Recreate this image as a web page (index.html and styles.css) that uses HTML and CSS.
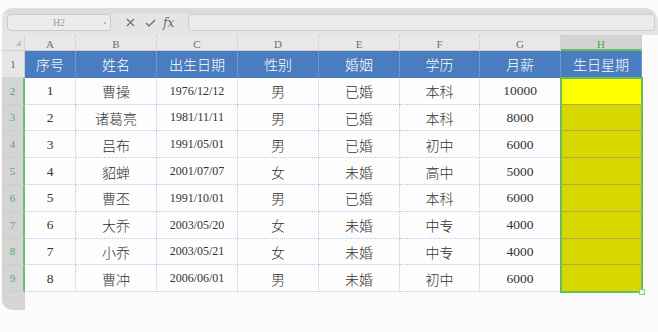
FILE: index.html
```html
<!DOCTYPE html>
<html lang="zh">
<head>
<meta charset="utf-8">
<link rel="stylesheet" href="styles.css">
</head>
<body>
<div class="app">
  <div class="toolbar">
    <div class="namebox"><span class="nb-text">H2</span><i class="caret"></i></div>
    <div class="tools">
      <svg class="ico-x" width="9" height="9" viewBox="0 0 9 9"><path d="M1 1L8 8M8 1L1 8" stroke="#707070" stroke-width="1.2" fill="none"/></svg>
      <svg class="ico-ok" width="11" height="8" viewBox="0 0 11 8"><path d="M1 4L4 7L10 1" stroke="#707070" stroke-width="1.3" fill="none"/></svg>
      <span class="fx">fx</span>
    </div>
    <div class="formula"></div>
  </div>
  <div class="sheet">
    <div class="corner"><i class="tri"></i></div>
    <div class="ch">A</div><div class="ch">B</div><div class="ch">C</div><div class="ch">D</div>
    <div class="ch">E</div><div class="ch">F</div><div class="ch">G</div><div class="ch sel">H</div>

    <div class="rh">1</div>
    <div class="c hd">序号</div><div class="c hd">姓名</div><div class="c hd">出生日期</div><div class="c hd">性别</div>
    <div class="c hd">婚姻</div><div class="c hd">学历</div><div class="c hd">月薪</div><div class="c hd">生日星期</div>

    <div class="rh sel">2</div>
    <div class="c num">1</div><div class="c">曹操</div><div class="c date">1976/12/12</div><div class="c">男</div>
    <div class="c">已婚</div><div class="c">本科</div><div class="c num">10000</div><div class="c yel active first"></div>

    <div class="rh sel">3</div>
    <div class="c num">2</div><div class="c">诸葛亮</div><div class="c date">1981/11/11</div><div class="c">男</div>
    <div class="c">已婚</div><div class="c">本科</div><div class="c num">8000</div><div class="c yel"></div>

    <div class="rh sel">4</div>
    <div class="c num">3</div><div class="c">吕布</div><div class="c date">1991/05/01</div><div class="c">男</div>
    <div class="c">已婚</div><div class="c">初中</div><div class="c num">6000</div><div class="c yel"></div>

    <div class="rh sel">5</div>
    <div class="c num">4</div><div class="c">貂蝉</div><div class="c date">2001/07/07</div><div class="c">女</div>
    <div class="c">未婚</div><div class="c">高中</div><div class="c num">5000</div><div class="c yel"></div>

    <div class="rh sel">6</div>
    <div class="c num">5</div><div class="c">曹丕</div><div class="c date">1991/10/01</div><div class="c">男</div>
    <div class="c">已婚</div><div class="c">本科</div><div class="c num">6000</div><div class="c yel"></div>

    <div class="rh sel">7</div>
    <div class="c num">6</div><div class="c">大乔</div><div class="c date">2003/05/20</div><div class="c">女</div>
    <div class="c">未婚</div><div class="c">中专</div><div class="c num">4000</div><div class="c yel"></div>

    <div class="rh sel">8</div>
    <div class="c num">7</div><div class="c">小乔</div><div class="c date">2003/05/21</div><div class="c">女</div>
    <div class="c">未婚</div><div class="c">中专</div><div class="c num">4000</div><div class="c yel"></div>

    <div class="rh sel">9</div>
    <div class="c num">8</div><div class="c">曹冲</div><div class="c date">2006/06/01</div><div class="c">男</div>
    <div class="c">未婚</div><div class="c">初中</div><div class="c num">6000</div><div class="c yel last"><i class="handle"></i></div>

    <div class="tail"></div>
  </div>
</div>
</body>
</html>
```

FILE: styles.css
```css
html, body {
  margin: 0;
  padding: 0;
}
body {
  background: #fbfbfc;
  width: 658px;
  height: 332px;
  overflow: hidden;
  font-family: "Liberation Serif", "Noto Sans CJK SC", serif;
}
.app {
  margin: 8px 0 0 2px;
  width: 656px;
}
.toolbar {
  height: 27px;
  box-sizing: border-box;
  padding: 6px 3px 4px 5px;
  display: flex;
  align-items: center;
  background: linear-gradient(#dcdcdc 0, #dcdcdc 6px, #e5e5e5 6px);
  border-radius: 10px 14px 0 0;
}
.namebox {
  width: 104px;
  height: 17px;
  box-sizing: border-box;
  border: 1px solid #c9c9c9;
  border-radius: 4px;
  background: #ececec;
  display: flex;
  align-items: center;
}
.nb-text {
  flex: 1;
  text-align: center;
  font-size: 10px;
  color: #9c9c9c;
  padding-left: 6px;
}
.caret {
  width: 2px;
  height: 2px;
  background: #b5b5b5;
  margin-right: 4px;
}
.tools {
  display: flex;
  align-items: center;
  margin-left: 15px;
  width: 62px;
}
.ico-x { margin-right: 10px; }
.ico-ok { margin-right: 7px; }
.fx {
  font-family: "DejaVu Serif", serif;
  font-style: italic;
  font-size: 12px;
  color: #6b6b6b;
  line-height: 1;
}
.formula {
  flex: 1;
  height: 17px;
  box-sizing: border-box;
  border: 1px solid #cdcdcd;
  border-radius: 4px;
  background: #ececec;
}
.sheet {
  display: grid;
  grid-template-columns: 23px 51px repeat(4, 81px) 80px 81px 81px;
  grid-template-rows: 16px repeat(9, 26.8px) 18px;
  width: 640px;
}
.sheet > div {
  box-sizing: border-box;
  display: flex;
  align-items: center;
  justify-content: center;
}
.corner {
  background: #e6e6e6;
  border-right: 1px solid #d2d2d2;
  border-bottom: 1px solid #cfcfcf;
  position: relative;
}
.tri {
  position: absolute;
  right: 3px;
  bottom: 4px;
  width: 0;
  height: 0;
  border-left: 6px solid transparent;
  border-bottom: 6px solid #c2c2c2;
}
.ch {
  background: #e8e8e8;
  border-right: 1px dotted #c6c6c6;
  border-bottom: 1px solid #cdcdcd;
  font-size: 11px;
  color: #707070;
  padding-top: 2px;
}
.ch.sel {
  background: #d3d3d3;
  color: #4fa64f;
  border-bottom: 2px solid #66bb61;
  padding-top: 3px;
}
.rh {
  background: #e6e6e6;
  border-right: 1px solid #cfcfcf;
  border-bottom: 1px solid #d6d6d6;
  font-size: 11px;
  color: #666;
}
.rh.sel {
  background: #d4d4d4;
  color: #5ca95c;
  border-right: 2px solid #6cc06a;
  border-bottom-color: #cdcdcd;
}
.c {
  background: #fdfdfd;
  border-right: 1px dotted #b3cbea;
  border-bottom: 1px dotted #b3cbea;
  font-family: "Noto Sans CJK SC", sans-serif;
  font-weight: 300;
  font-size: 14px;
  color: #333333;
  padding-top: 1px;
}
.c.num {
  font-family: "Liberation Serif", serif;
  font-weight: 400;
  font-size: 13.5px;
}
.c.date {
  font-family: "Liberation Serif", serif;
  font-weight: 400;
  font-size: 12px;
}
.c.hd {
  background: #4a7dbf;
  color: #ffffff;
  border-right: 1px dotted #8fb0dc;
  border-bottom: 1px solid #4a7dbf;
  padding-top: 0;
}
.c.yel {
  background: #d8d800;
  border-left: 2px solid #68bd5f;
  border-right: 2px solid #68bd5f;
  border-bottom: 1px solid #a9aa55;
  margin-left: -1px;
  margin-right: -1px;
}
.c.yel.active {
  background: #ffff00;
}
.c.yel.first {
  border-top: 2px solid #68bd5f;
  margin-top: -1px;
}
.c.yel.last {
  border-bottom: 2px solid #68bd5f;
  margin-bottom: -1px;
  position: relative;
}
.handle {
  position: absolute;
  right: -4px;
  bottom: -4px;
  width: 4px;
  height: 4px;
  background: #eef6ec;
  border: 1px solid #8acb84;
}
.tail {
  grid-column: 1;
  grid-row: 11;
  background: #d6d6d6;
  border-bottom-left-radius: 10px;
}
```
